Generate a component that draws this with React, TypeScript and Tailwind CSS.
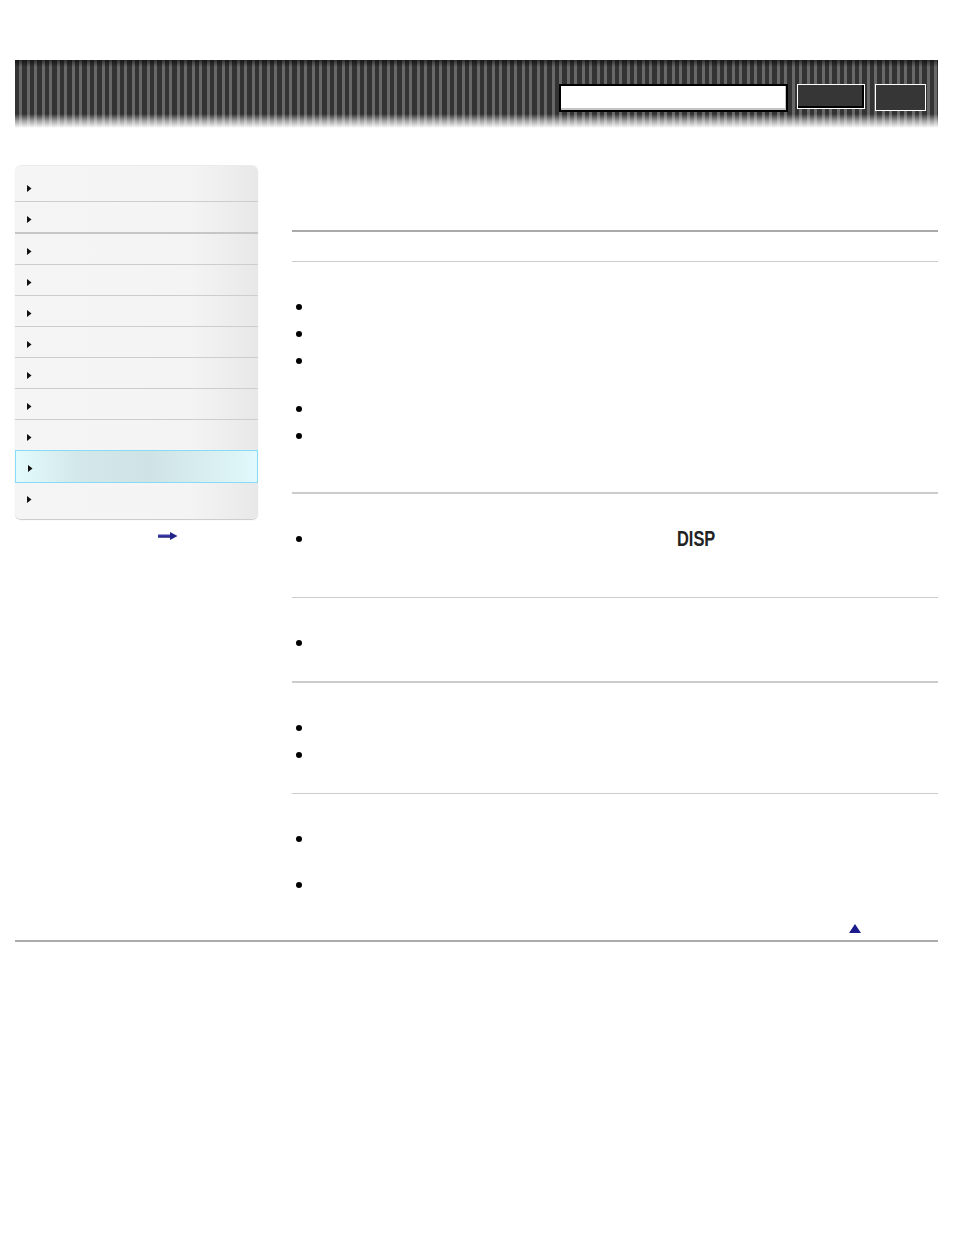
import React from "react";

/* 帮助指南页面 —— 顶部条纹栏 + 左侧目录 + 正文项目列表 */

const NAV_ROWS = [
  "h-[36px] pt-[10px] border-b border-[#cdcdcd]",
  "h-[32px] pt-[4px] border-b-2 border-[#c6c6c6]",
  "h-[31px] pt-[4px] border-b border-[#cdcdcd]",
  "h-[31px] pt-[4px] border-b border-[#cdcdcd]",
  "h-[31px] pt-[4px] border-b border-[#cdcdcd]",
  "h-[31px] pt-[4px] border-b border-[#cdcdcd]",
  "h-[31px] pt-[4px] border-b border-[#cdcdcd]",
  "h-[31px] pt-[4px] border-b border-[#cdcdcd]",
  "h-[30px] pt-[4px]",
  "h-[33px] pt-[4px] border border-[#86dcf4] bg-[linear-gradient(90deg,#e3fbfd_0%,#d3e8eb_25%,#cfe3e6_55%,#d8eef1_80%,#e1f9fc_100%)]",
  "h-[36px] pb-[4px]",
];

function Caret() {
  return (
    <svg width="5" height="7" viewBox="0 0 5 7" className="block">
      <path d="M0 0L4.5 3.5L0 7Z" fill="#111" />
    </svg>
  );
}

function Dot() {
  return <span className="block w-[6px] h-[6px] rounded-full bg-black shrink-0" />;
}

function Item({ extra = "", children }: { extra?: string; children?: React.ReactNode }) {
  return (
    <div className={`flex flex-col ${extra}`}>
      <div className="h-[27px] flex items-center pl-[4px]">
        <Dot />
        {children}
      </div>
    </div>
  );
}

function Header() {
  return (
    <div className="h-[68px] w-full flex justify-end items-start pt-[24px] pr-[12px] gap-[9px] bg-[linear-gradient(180deg,rgba(0,0,0,0.55)_0px,rgba(0,0,0,0)_7px,rgba(255,255,255,0)_54px,rgba(255,255,255,0.55)_61px,#ffffff_68px),repeating-linear-gradient(90deg,#333333_0px,#333333_4.5px,#686868_4.5px,#686868_7.5px)]">
      <div className="w-[229px] h-[28px] border-2 border-black bg-white shadow-[inset_-1px_-2px_0_#c4c4c4]" />
      <div className="w-[68px] h-[25px] border border-white bg-[#363636] shadow-[inset_-2px_-2px_0_#000]" />
      <div className="w-[51px] h-[27px] ml-[1px] border border-white bg-[#363636]" />
    </div>
  );
}

function Sidebar() {
  return (
    <aside className="w-[243px] shrink-0">
      <nav className="rounded-[6px] overflow-hidden bg-[linear-gradient(90deg,#f5f5f5_0%,#f4f4f4_72%,#e8e8e8_100%)] shadow-[0_1px_1px_rgba(0,0,0,0.22),0_-1px_0_#ececec]">
        {NAV_ROWS.map((cls, i) => (
          <div key={i} className={`flex items-center pl-[12px] ${cls}`}>
            <Caret />
          </div>
        ))}
      </nav>
      <div className="mt-[13px] ml-[143px]">
        <svg width="20" height="8" viewBox="0 0 20 8" className="block">
          <rect x="0" y="2.5" width="13" height="3" fill="#3b3ba8" />
          <rect x="0" y="4.5" width="13" height="1" fill="#1d1d78" />
          <path d="M12 0L19.5 4L12 8Z" fill="#22228a" />
        </svg>
      </div>
    </aside>
  );
}

function Main() {
  return (
    <main className="w-[646px] flex flex-col">
      <div className="h-[64px]" />
      <div className="h-[2px] bg-[#a9a9a9]" />
      <div className="h-[29px]" />
      <div className="h-px bg-[#cccccc]" />

      <section className="pt-[31px] pb-[43px]">
        <Item />
        <Item />
        <Item extra="pb-[21px]" />
        <Item />
        <Item />
      </section>
      <div className="h-[2px] bg-[#cccccc]" />

      <section className="pt-[31px] pb-[45px]">
        <Item>
          <span className="ml-[375px] inline-block origin-left scale-x-[0.745] font-['Liberation_Sans',Arial,sans-serif] font-bold text-[22px] leading-none text-[#222]">
            DISP
          </span>
        </Item>
      </section>
      <div className="h-px bg-[#cccccc]" />

      <section className="pt-[31px] pb-[25px]">
        <Item />
      </section>
      <div className="h-[2px] bg-[#cccccc]" />

      <section className="pt-[31px] pb-[25px]">
        <Item />
        <Item />
      </section>
      <div className="h-px bg-[#cccccc]" />

      <section className="pt-[31px]">
        <Item extra="pb-[19px]" />
        <Item />
      </section>
      <div className="flex justify-end pr-[77px] pt-[26px] pb-[7px]">
        <svg width="12" height="9" viewBox="0 0 12 9" className="block">
          <path d="M6 0L12 9H0Z" fill="#1c1c8e" />
        </svg>
      </div>
    </main>
  );
}

export default function App() {
  return (
    <div className="w-[954px] min-h-[1235px] bg-white font-['Liberation_Sans',Arial,sans-serif]">
      <div className="mx-[15px] w-[923px] pt-[60px]">
        <Header />
        <div className="flex gap-[34px] mt-[38px]">
          <Sidebar />
          <Main />
        </div>
        <div className="h-[2px] bg-[#ababab]" />
      </div>
    </div>
  );
}
